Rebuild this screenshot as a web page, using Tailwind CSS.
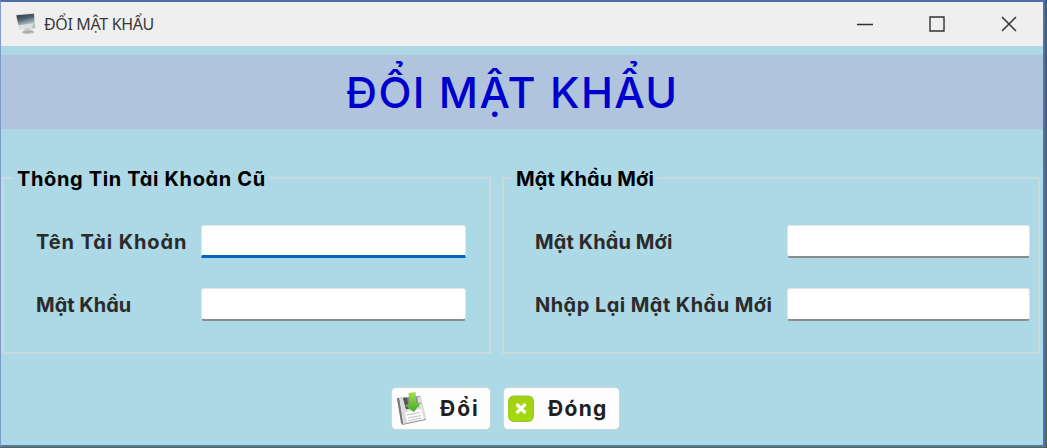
<!DOCTYPE html>
<html lang="vi">
<head>
<meta charset="utf-8">
<title>ĐỔI MẬT KHẨU</title>
<script src="https://cdn.jsdelivr.net/npm/@tailwindcss/browser@4"></script>
</head>
<body class="w-[1047px] h-[448px] overflow-hidden bg-linear-to-b from-[#48596b] via-[#59656d] to-[#58683e] font-['Inter','Liberation_Sans',sans-serif]">
<div class="flex flex-col w-[1045px] h-[447px] box-border border-t-2 border-t-[#4d6fa8] border-l border-l-[#7d9dc8] border-r-2 border-r-[#4f74ab] border-b-2 border-b-[#5678ad] bg-[#add8e6]">
  <header class="flex h-[44px] shrink-0 bg-[#efefef]">
    <svg class="mt-[9px] ml-[14px] w-[22px] h-[24px] shrink-0" viewBox="0 0 22 24">
      <defs><linearGradient id="scr" x1="0" y1="0" x2="0.4" y2="1"><stop offset="0" stop-color="#2a3640"/><stop offset=".5" stop-color="#4d5f6c"/><stop offset="1" stop-color="#b0c0ca"/></linearGradient></defs>
      <ellipse cx="13" cy="21.300" rx="6.500" ry="1.600" fill="#c2c2c2"/>
      <path d="M.5 3.500L19.300 1.800 20.300 17 4 18.800z" fill="#dcdede"/>
      <path d="M1.300 4.200L19 2.700 19.500 12.300 3.500 14.300z" fill="url(#scr)"/>
      <path d="M9 17.500l6-.5 1 3-6 .5z" fill="#c9c9c9"/>
      <path d="M7.500 20.500l9-1 3 .8-8 2z" fill="#a9a9a9"/>
      <path d="M19.300 11l1 6-4 .5z" fill="#bbb"/>
    </svg>
    <span class="ml-[7px] mt-[10px] h-[24px] leading-[24px] text-[16px] tracking-[-0.35px] whitespace-nowrap text-[#383838] font-['Noto_Sans',sans-serif]">ĐỔI MẬT KHẨU</span>
    <div class="ml-auto mt-[13px] mr-[26px] flex gap-[56px]">
      <svg class="w-[16px] h-[18px]" viewBox="0 0 16 18"><path d="M0 9.500H16" stroke="#333" stroke-width="1.500"/></svg>
      <svg class="w-[16px] h-[18px]" viewBox="0 0 16 18"><path d="M1 2H15V16H1z" fill="none" stroke="#333" stroke-width="1.400"/></svg>
      <svg class="w-[16px] h-[18px]" viewBox="0 0 16 18"><path d="M1 2L15 16M15 2L1 16" stroke="#333" stroke-width="1.500"/></svg>
    </div>
  </header>
  <h1 class="mt-[9px] h-[74px] shrink-0 bg-[#b0c4de] pl-[345px] leading-[75px] text-[43px] tracking-[1.4px] font-medium whitespace-nowrap text-[#0000cd]">ĐỔI MẬT KHẨU</h1>
  <main class="mt-[38px] flex gap-[11px] pl-px [font-feature-settings:'cv11'] font-[650] text-[20px] text-[#2b2b2b]">
    <fieldset class="w-[489px] h-[187px] border-2 border-[#c9dade]">
      <legend class="ml-[8px] pl-[5px] pr-[3px] h-[22px] leading-[24px] tracking-[0.65px] whitespace-nowrap text-black">Thông Tin Tài Khoản Cũ</legend>
      <div class="pl-[32px] pt-[36px] flex flex-col gap-[30px]">
        <div class="flex items-center h-[33px]"><label class="w-[165px] tracking-[0.9px] whitespace-nowrap">Tên Tài Khoản</label><div class="w-[265px] h-[33px] bg-white rounded-t-[3px] border border-[#e2e5e6] border-b-[3px] border-b-[#0067c0]"></div></div>
        <div class="flex items-center h-[33px]"><label class="w-[165px] whitespace-nowrap">Mật Khẩu</label><div class="w-[265px] h-[33px] bg-white rounded-[3px] border border-[#e2e5e6] border-b-2 border-b-[#8c8c8c]"></div></div>
      </div>
    </fieldset>
    <fieldset class="w-[538px] h-[187px] border-2 border-[#c9dade]">
      <legend class="ml-[7px] pl-[5px] pr-[3px] h-[22px] leading-[24px] tracking-[0.15px] whitespace-nowrap text-black">Mật Khẩu Mới</legend>
      <div class="pl-[31px] pt-[36px] flex flex-col gap-[30px]">
        <div class="flex items-center h-[33px]"><label class="w-[252px] tracking-[0.1px] whitespace-nowrap">Mật Khẩu Mới</label><div class="w-[243px] h-[33px] bg-white rounded-[3px] border border-[#e2e5e6] border-b-2 border-b-[#8c8c8c]"></div></div>
        <div class="flex items-center h-[33px]"><label class="w-[252px] tracking-[0.45px] whitespace-nowrap">Nhập Lại Mật Khẩu Mới</label><div class="w-[243px] h-[33px] bg-white rounded-[3px] border border-[#e2e5e6] border-b-2 border-b-[#8c8c8c]"></div></div>
      </div>
    </fieldset>
  </main>
  <footer class="mt-[33px] ml-[390px] flex gap-[12px] font-[650] text-[21px] text-[#202020]">
    <button class="flex items-center w-[100px] h-[43px] rounded-[5px] border border-[#cfd5d8] bg-[#fdfdfd] pl-[5px]">
      <svg class="w-[30px] h-[34px] shrink-0" viewBox="0 0 30 34">
        <defs><linearGradient id="ar" x1="0" y1="0" x2="0" y2="1"><stop offset="0" stop-color="#a4e04e"/><stop offset="1" stop-color="#44a82c"/></linearGradient></defs>
        <path d="M0 6L23 4 29 28 5 33z" fill="#8c8c8c"/>
        <path d="M2 6L24 5 29.500 27 6 32z" fill="#dcdcdc"/>
        <path d="M0 6l2 0 4 26-2-1z" fill="#777"/>
        <path d="M6 6l14-1 2 10-13 2z" fill="#888"/>
        <path d="M6 6l4-.3 2 11-3 .5z" fill="#555"/>
        <path d="M8 20l16-3 3 10-17 3z" fill="#fff"/>
        <path d="M10 23l13-2.500M11 26l13-2.500M11.500 28.500l13-2.500" stroke="#c0c0c0"/>
        <path d="M11.500 1l7-1 1 11 4.500-.5-7 9.500-9.500-7 5-.8z" fill="url(#ar)"/>
      </svg>
      <span class="ml-[13px] tracking-[2px] whitespace-nowrap">Đổi</span>
    </button>
    <button class="flex items-center w-[117px] h-[43px] rounded-[5px] border border-[#cfd5d8] bg-[#fdfdfd] pl-[4px]">
      <svg class="w-[26px] h-[28px] shrink-0" viewBox="0 0 26 28">
        <defs><linearGradient id="gr" x1="0" y1="0" x2="0" y2="1"><stop offset="0" stop-color="#a2cf10"/><stop offset="1" stop-color="#a5dc08"/></linearGradient></defs>
        <rect x=".7" y="1.200" width="24.600" height="25" rx="5" fill="url(#gr)" stroke="#9aca2c" stroke-width="1.400"/>
        <path d="M8.500 9l9 9M17.500 9L8.500 18" stroke="#fff" stroke-width="3.200"/>
      </svg>
      <span class="ml-[14px] tracking-[1.3px] whitespace-nowrap">Đóng</span>
    </button>
  </footer>
</div>
</body>
</html>
